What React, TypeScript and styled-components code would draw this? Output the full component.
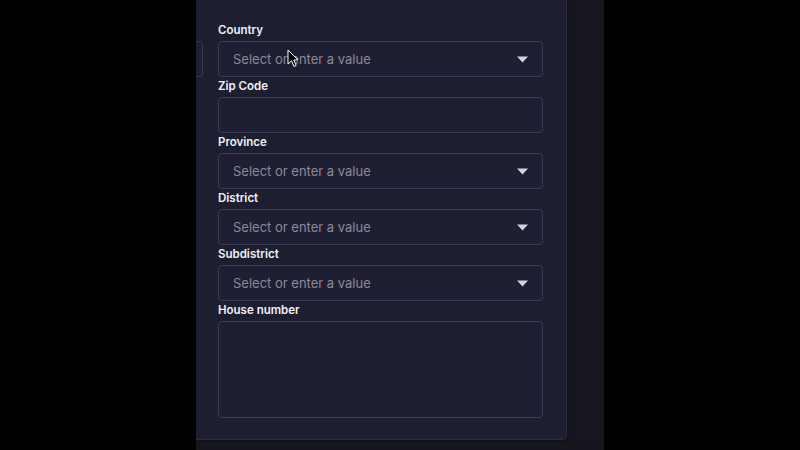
import React from "react";
import styled, { createGlobalStyle } from "styled-components";

const GlobalStyle = createGlobalStyle`
  html, body {
    margin: 0;
    padding: 0;
    background: #000;
  }
  body {
    font-family: Inter, "Noto Sans", sans-serif;
    -webkit-font-smoothing: antialiased;
  }
`;

const Screen = styled.div`
  width: 800px;
  height: 450px;
  display: flex;
  justify-content: center;
  background: #000;
`;

const Viewport = styled.div`
  position: relative;
  width: 408px;
  height: 450px;
  overflow: hidden;
  background: #15151d;
  display: flex;
  flex-direction: column;
`;

const Page = styled.div`
  display: flex;
  justify-content: flex-end;
  padding-right: 37px;
  background: #17161f;
`;

const Card = styled.div`
  flex: none;
  width: 620px;
  box-sizing: border-box;
  padding: 21px 23px 21px 0;
  background: #1e1e31;
  border: 1px solid #2d2c45;
  border-top: none;
  border-radius: 0 0 5px 5px;
  box-shadow: 1px 1px 2px rgba(0, 0, 0, 0.35);
  display: grid;
  grid-template-columns: 1fr 325px;
  column-gap: 15px;
`;

const Column = styled.div`
  display: flex;
  flex-direction: column;
`;

const Field = styled.div`
  display: flex;
  flex-direction: column;
`;

const Label = styled.label`
  font-size: 11.5px;
  line-height: 18px;
  height: 18px;
  font-weight: 600;
  color: #f1f1f6;
  margin-bottom: 2px;
`;

const Box = styled.div<{ $tall?: boolean }>`
  box-sizing: border-box;
  height: ${(p) => (p.$tall ? "97px" : "36px")};
  border: 1px solid #3b3a57;
  border-radius: 4px;
  background: #1f1f33;
  display: flex;
  align-items: center;
  padding: 0 14px;
`;

const Placeholder = styled.span`
  flex: 1;
  font-size: 13px;
  color: #8a899d;
`;

const Caret = styled.svg`
  width: 11px;
  height: 7px;
`;

const Cursor = styled.svg`
  position: absolute;
  left: 91px;
  top: 49px;
  width: 12px;
  height: 19px;
`;

const SelectBox = () => (
  <Box>
    <Placeholder>Select or enter a value</Placeholder>
    <Caret viewBox="0 0 11 7">
      <path d="M0 0.5 H11 L5.5 6.5 Z" fill="#d4d3dc" />
    </Caret>
  </Box>
);

const fields: { label: string; kind: "select" | "text" | "area" }[] = [
  { label: "Country", kind: "select" },
  { label: "Zip Code", kind: "text" },
  { label: "Province", kind: "select" },
  { label: "District", kind: "select" },
  { label: "Subdistrict", kind: "select" },
  { label: "House number", kind: "area" },
];

const App = () => {
  return (
    <Screen>
      <GlobalStyle />
      <Viewport>
        <Page>
          <Card>
            <Column>
              <Field>
                <Label />
                <Box />
              </Field>
            </Column>
            <Column>
              {fields.map((f) => (
                <Field key={f.label}>
                  <Label>{f.label}</Label>
                  {f.kind === "select" && <SelectBox />}
                  {f.kind === "text" && <Box />}
                  {f.kind === "area" && <Box $tall />}
                </Field>
              ))}
            </Column>
          </Card>
        </Page>
        <Cursor viewBox="0 0 12 19">
          <path
            d="M1 1 L1 15 L4.5 11.8 L7 17.5 L9.2 16.5 L6.8 11 L11 11 Z"
            fill="#000"
            stroke="#fff"
            strokeWidth="1"
            strokeLinejoin="round"
          />
        </Cursor>
      </Viewport>
    </Screen>
  );
};

export default App;
